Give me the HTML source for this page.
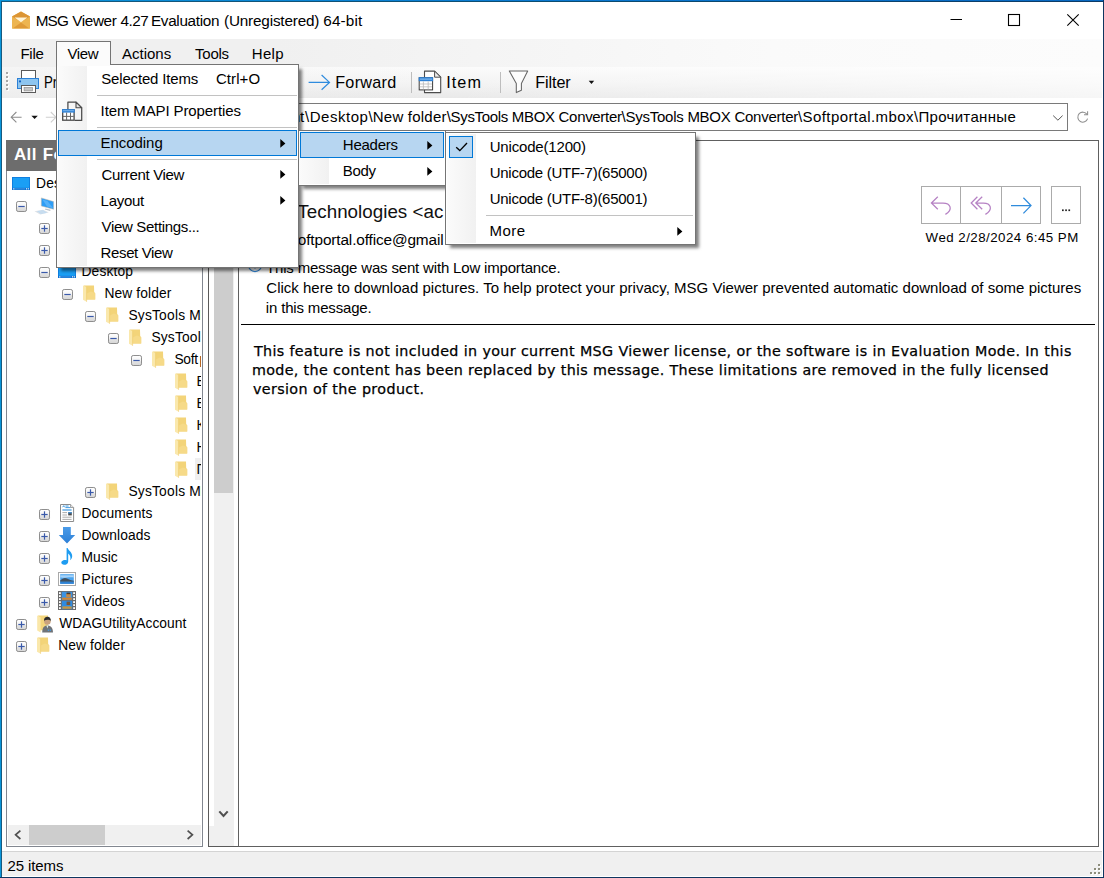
<!DOCTYPE html>
<html lang="en"><head><meta charset="utf-8"><title>MSG Viewer 4.27 Evaluation (Unregistered) 64-bit</title>
<style>
html,body{margin:0;padding:0;}
body{width:1104px;height:878px;position:relative;overflow:hidden;background:#fff;font-family:"Liberation Sans",sans-serif;}
.L{position:absolute;left:0;top:0;width:1104px;height:878px;overflow:hidden;}
svg{overflow:visible;display:block;}
</style></head><body>
<div class="L" style=""><!-- win -->
<div style="position:absolute;left:0px;top:0px;width:1104px;height:878px;background:#fff;"></div>
<div style="position:absolute;left:6px;top:140px;width:197px;height:707px;border:1px solid #828790;box-sizing:border-box;background:#fff;"></div>
<div style="position:absolute;left:6px;top:140px;width:197px;height:31px;background:#6d6d6d;"></div>
<svg width="0" height="0" style="position:absolute"><defs><linearGradient id="eg" x1="0" y1="0" x2="0" y2="1"><stop offset="0" stop-color="#fff"/><stop offset=".5" stop-color="#f3f3f3"/><stop offset=".62" stop-color="#e2e2e2"/><stop offset="1" stop-color="#d6d6d6"/></linearGradient><linearGradient id="dg" x1="0" y1="0" x2="0" y2="1"><stop offset="0" stop-color="#4a9be8"/><stop offset="1" stop-color="#2c7fd6"/></linearGradient></defs></svg>
</div>
<div class="L" style=""><!-- title -->
<svg style="position:absolute;left:11px;top:10px;" width="20" height="20" viewBox="0 0 20 20"><polygon points="1,6.5 10,1.5 19,6.5 19,18.7 1,18.7" fill="#edb551"/><polygon points="1,6.5 10,1.5 19,6.5 10,12" fill="#dc9534"/><polygon points="3.6,7.4 16.4,7.4 10,12.3" fill="#fff6da"/><polygon points="2,18.2 10,12.4 18,18.2" fill="#df9a38"/></svg>
<span style="position:absolute;left:35.8px;top:12.65px;font:400 15.3px/15.3px 'Liberation Sans', sans-serif;color:#000;white-space:pre;letter-spacing:-0.923px;">MSG </span>
<span style="position:absolute;left:72.2px;top:12.65px;font:400 15.3px/15.3px 'Liberation Sans', sans-serif;color:#000;white-space:pre;letter-spacing:-0.362px;">Viewer </span>
<span style="position:absolute;left:120.4px;top:12.65px;font:400 15.3px/15.3px 'Liberation Sans', sans-serif;color:#000;white-space:pre;letter-spacing:-0.484px;">4.27 </span>
<span style="position:absolute;left:151px;top:12.65px;font:400 15.3px/15.3px 'Liberation Sans', sans-serif;color:#000;white-space:pre;letter-spacing:-0.335px;">Evaluation </span>
<span style="position:absolute;left:224px;top:12.65px;font:400 15.3px/15.3px 'Liberation Sans', sans-serif;color:#000;white-space:pre;letter-spacing:-0.181px;">(Unregistered) </span>
<span style="position:absolute;left:323.3px;top:12.65px;font:400 15.3px/15.3px 'Liberation Sans', sans-serif;color:#000;white-space:pre;letter-spacing:0.137px;">64-bit</span>
<svg style="position:absolute;left:940px;top:2px;" width="160" height="37" viewBox="0 0 160 37"><path d="M10.5 17.5H22" stroke="#000" stroke-width="1" fill="none"/><rect x="68.5" y="12.5" width="11" height="11" stroke="#000" stroke-width="1.1" fill="none"/><path d="M127.3 12.3L138.7 23.7M138.7 12.3L127.3 23.7" stroke="#000" stroke-width="1.1" fill="none"/></svg>
</div>
<div class="L" style=""><!-- menubar -->
<div style="position:absolute;left:2px;top:39px;width:1100px;height:28px;background:linear-gradient(to right,#f0f0f0 0%,#f0f0f0 25%,#fafafa 70%,#fcfcfc 100%);"></div>
<span style="position:absolute;left:20.4px;top:46.00px;font:400 15px/15px 'Liberation Sans', sans-serif;color:#000;white-space:pre;letter-spacing:-0.243px;">File</span>
<span style="position:absolute;left:122.1px;top:46.00px;font:400 15px/15px 'Liberation Sans', sans-serif;color:#000;white-space:pre;letter-spacing:-0.015px;">Actions</span>
<span style="position:absolute;left:195.1px;top:46.00px;font:400 15px/15px 'Liberation Sans', sans-serif;color:#000;white-space:pre;letter-spacing:-0.254px;">Tools</span>
<span style="position:absolute;left:251.7px;top:46.00px;font:400 15px/15px 'Liberation Sans', sans-serif;color:#000;white-space:pre;letter-spacing:0.364px;">Help</span>
</div>
<div class="L" style=""><!-- toolbar -->
<div style="position:absolute;left:2px;top:67px;width:1100px;height:31px;background:linear-gradient(to bottom,#fbfbfb 0%,#f4f4f4 50%,#e9e9e9 100%);"></div>
<div style="position:absolute;left:2px;top:67px;width:1100px;height:31px;background:linear-gradient(to right,rgba(240,240,240,.6) 0%,rgba(255,255,255,0) 40%,rgba(255,255,255,.6) 100%);"></div>
<svg style="position:absolute;left:5px;top:70px;" width="5" height="24" viewBox="0 0 5 24"><rect x="2" y="3" width="2" height="2" fill="#fff"/><rect x="1" y="2" width="2" height="2" fill="#a6a6a6"/><rect x="2" y="7" width="2" height="2" fill="#fff"/><rect x="1" y="6" width="2" height="2" fill="#a6a6a6"/><rect x="2" y="11" width="2" height="2" fill="#fff"/><rect x="1" y="10" width="2" height="2" fill="#a6a6a6"/><rect x="2" y="15" width="2" height="2" fill="#fff"/><rect x="1" y="14" width="2" height="2" fill="#a6a6a6"/><rect x="2" y="19" width="2" height="2" fill="#fff"/><rect x="1" y="18" width="2" height="2" fill="#a6a6a6"/></svg>
<svg style="position:absolute;left:16px;top:69px;" width="25" height="25" viewBox="0 0 25 25"><rect x="5.5" y="1.5" width="14" height="8" fill="#fff" stroke="#5a5a5a" stroke-width="1"/><rect x="1.5" y="9.5" width="21" height="10" fill="#8ec5ef" stroke="#2b80d6" stroke-width="1"/><circle cx="4" cy="12.4" r="1.1" fill="#1566c8"/><rect x="5.5" y="16.5" width="14" height="7" fill="#fff" stroke="#5a5a5a" stroke-width="1"/><rect x="8.1" y="18.6" width="8.4" height="3.3" fill="#c6c6c6" stroke="#8f8f8f" stroke-width=".7"/></svg>
<span style="position:absolute;left:43.8px;top:73.89px;font:400 16.2px/16.2px 'Liberation Sans', sans-serif;color:#000;white-space:pre;transform:scaleX(.82);transform-origin:0 0;">Print</span>
<svg style="position:absolute;left:306px;top:72px;" width="26" height="20" viewBox="0 0 26 20"><path d="M2.6 10.4H23.2M15.6 3L23.5 10.4L15.6 17.8" stroke="#2e8bde" stroke-width="1.2" fill="none"/></svg>
<span style="position:absolute;left:335.2px;top:73.89px;font:400 16.2px/16.2px 'Liberation Sans', sans-serif;color:#000;white-space:pre;letter-spacing:0.289px;">Forward</span>
<div style="position:absolute;left:411px;top:72px;width:1px;height:21px;background:#bdbdbd;"></div>
<svg style="position:absolute;left:418px;top:69px;" width="24" height="24" viewBox="0 0 24 24"><path d="M6.5 2.1H16.6L22.7 8.2V23.6H6.5Z" fill="#fff" stroke="#4d4d4d" stroke-width="1.1" stroke-linejoin="round"/><path d="M16.6 2.1V8.2H22.7Z" fill="#ececec" stroke="#4d4d4d" stroke-width="1" stroke-linejoin="round"/><rect x="1.2" y="8.7" width="13.4" height="12.2" fill="#fff" stroke="#3a3a3a" stroke-width="1"/><rect x=".7" y="8.2" width="14.4" height="4" fill="#2f82d6"/><path d="M2 10.1H14" stroke="#9ccaf3" stroke-width=".9"/><path d="M5.4 12.4V20.4M10.2 12.4V20.4M1.8 15H14M1.8 17.8H14" stroke="#b9b9b9" stroke-width=".8" fill="none"/></svg>
<span style="position:absolute;left:446.3px;top:73.89px;font:400 16.2px/16.2px 'Liberation Sans', sans-serif;color:#000;white-space:pre;letter-spacing:1.034px;">Item</span>
<div style="position:absolute;left:500px;top:72px;width:1px;height:21px;background:#bdbdbd;"></div>
<svg style="position:absolute;left:508px;top:70px;" width="22" height="24" viewBox="0 0 22 24"><path d="M1.3 1H19.7L13.4 13.6V20.2L8.3 22.6V13.6Z" fill="#fdfdfd" stroke="#666" stroke-width="1.05" stroke-linejoin="round"/></svg>
<span style="position:absolute;left:535.2px;top:73.79px;font:400 16.2px/16.2px 'Liberation Sans', sans-serif;color:#000;white-space:pre;letter-spacing:-0.096px;">Filter</span>
<svg style="position:absolute;left:588px;top:79px;" width="8" height="6" viewBox="0 0 8 6"><path d="M.7 1.8H6.2L3.45 5.1Z" fill="#111"/></svg>
</div>
<div class="L" style=""><!-- addr -->
<svg style="position:absolute;left:8px;top:108px;" width="52" height="18" viewBox="0 0 52 18"><path d="M3.2 9.2H13.6M8.4 4L3.2 9.2L8.4 14.4" stroke="#8c8c8c" stroke-width="1.1" fill="none"/><path d="M23.4 7.8H29.8L26.6 11Z" fill="#111"/><path d="M37.8 9.2H48M42.8 4L48 9.2L42.8 14.4" stroke="#cfcfcf" stroke-width="1.1" fill="none"/></svg>
<div style="position:absolute;left:70px;top:103px;width:998px;height:28px;border:1px solid #7a7a7a;box-sizing:border-box;background:#fff;"></div>
<span style="position:absolute;left:291.9px;top:108.90px;font:400 15px/15px 'Liberation Sans', sans-serif;color:#000;white-space:pre;letter-spacing:-0.155px;">nt</span>
<span style="position:absolute;left:305.1px;top:108.90px;font:400 15px/15px 'Liberation Sans', sans-serif;color:#000;white-space:pre;letter-spacing:0.513px;">\Desktop</span>
<span style="position:absolute;left:368.4px;top:108.90px;font:400 15px/15px 'Liberation Sans', sans-serif;color:#000;white-space:pre;letter-spacing:0.221px;">\New folder</span>
<span style="position:absolute;left:446.7px;top:108.90px;font:400 15px/15px 'Liberation Sans', sans-serif;color:#000;white-space:pre;letter-spacing:-0.319px;">\SysTools MBOX Converter</span>
<span style="position:absolute;left:621.6px;top:108.90px;font:400 15px/15px 'Liberation Sans', sans-serif;color:#000;white-space:pre;letter-spacing:-0.257px;">\SysTools MBOX Converter</span>
<span style="position:absolute;left:798px;top:108.90px;font:400 15px/15px 'Liberation Sans', sans-serif;color:#000;white-space:pre;letter-spacing:0.418px;">\Softportal.mbox</span>
<span style="position:absolute;left:913.9px;top:108.90px;font:400 15px/15px 'Liberation Sans', sans-serif;color:#000;white-space:pre;letter-spacing:0.328px;">\Прочитанные</span>
<svg style="position:absolute;left:1050px;top:110px;" width="16" height="14" viewBox="0 0 16 14"><path d="M3.2 5.6L7.9 10.2L12.6 5.6" stroke="#555" stroke-width="1" fill="none"/></svg>
<svg style="position:absolute;left:1075px;top:108px;" width="18" height="18" viewBox="0 0 18 18"><path d="M12 6.4A5 5 0 1 0 12.6 10.6" stroke="#8e8e8e" stroke-width="1.05" fill="none"/><path d="M12.6 3.2V6.8H9" stroke="#8e8e8e" stroke-width="1.05" fill="none"/></svg>
</div>
<div class="L" style="left:7px;top:141px;width:194px;height:705px;"><!-- tree -->
<span style="position:absolute;left:6.9px;top:4.61px;font:700 17px/17px 'Liberation Sans', sans-serif;color:#fff;white-space:pre;letter-spacing:.45px;word-spacing:.6px;">All Folders</span>
<svg style="position:absolute;left:5px;top:36px;" width="18" height="13" viewBox="0 0 18 13"><rect x=".5" y=".5" width="17" height="12" fill="#1a9ff5" stroke="#0f7fe0" stroke-width="1"/><rect x="0" y="10.8" width="18" height="2.2" fill="#0a6fd2"/><rect x="1.2" y="11.3" width="1.2" height="1.2" fill="#fff"/><rect x="2.6" y="11.6" width="10.6" height=".7" fill="#5fa9ea"/><rect x="14" y="11.3" width="1.1" height="1.1" fill="#fff"/><rect x="15.8" y="11.3" width="1.1" height="1.1" fill="#fff"/></svg>
<span style="position:absolute;left:29.1px;top:36.22px;font:400 13.8px/13.8px 'Liberation Sans', sans-serif;color:#000;white-space:pre;letter-spacing:0.143px;">Desktop</span>
<svg style="position:absolute;left:9px;top:60px;" width="11" height="11" viewBox="0 0 11 11"><rect x=".5" y=".5" width="10" height="10" rx="1.7" fill="url(#eg)" stroke="#8e8e8e"/><path d="M2.3 5.5H8.7" stroke="#3a59aa" stroke-width="1.2"/></svg>
<svg style="position:absolute;left:27px;top:55px;" width="22" height="20" viewBox="0 0 22 20"><path d="M7.3 1.9L19.6 5.6V13.3L7.3 10Z" fill="#2e9df5" stroke="#c9b9a6" stroke-width=".5"/><path d="M8.4 3.4L13.4 4.9L18.6 11.6V12L13 10.5Z" fill="#63b8f9" opacity=".75"/><path d="M11.4 12.4L16.6 13.8L16.2 14.9L10.8 13.6Z" fill="#b9bfc7"/><path d="M.5 15.3L9 13.8L14.8 16.5L6.2 18.6Z" fill="#dde1e6"/><path d="M3.4 15.6L9.6 14.6M4.8 16.6L11.2 15.4M6.4 17.5L12.6 16.4" stroke="#b7d9f5" stroke-width=".8"/></svg>
<span style="position:absolute;left:52px;top:58.22px;font:400 13.8px/13.8px 'Liberation Sans', sans-serif;color:#000;white-space:pre;">This PC</span>
<svg style="position:absolute;left:32px;top:82px;" width="11" height="11" viewBox="0 0 11 11"><rect x=".5" y=".5" width="10" height="10" rx="1.7" fill="url(#eg)" stroke="#8e8e8e"/><path d="M2.3 5.5H8.7" stroke="#3a59aa" stroke-width="1.2"/><path d="M5.5 2.3V8.7" stroke="#3a59aa" stroke-width="1.2"/></svg>
<span style="position:absolute;left:75.5px;top:80.22px;font:400 13.8px/13.8px 'Liberation Sans', sans-serif;color:#000;white-space:pre;">3D Objects</span>
<svg style="position:absolute;left:32px;top:104px;" width="11" height="11" viewBox="0 0 11 11"><rect x=".5" y=".5" width="10" height="10" rx="1.7" fill="url(#eg)" stroke="#8e8e8e"/><path d="M2.3 5.5H8.7" stroke="#3a59aa" stroke-width="1.2"/><path d="M5.5 2.3V8.7" stroke="#3a59aa" stroke-width="1.2"/></svg>
<span style="position:absolute;left:75.5px;top:102.22px;font:400 13.8px/13.8px 'Liberation Sans', sans-serif;color:#000;white-space:pre;">Contacts</span>
<svg style="position:absolute;left:32px;top:126px;" width="11" height="11" viewBox="0 0 11 11"><rect x=".5" y=".5" width="10" height="10" rx="1.7" fill="url(#eg)" stroke="#8e8e8e"/><path d="M2.3 5.5H8.7" stroke="#3a59aa" stroke-width="1.2"/></svg>
<svg style="position:absolute;left:51px;top:124px;" width="18" height="13" viewBox="0 0 18 13"><rect x=".5" y=".5" width="17" height="12" fill="#1a9ff5" stroke="#0f7fe0" stroke-width="1"/><rect x="0" y="10.8" width="18" height="2.2" fill="#0a6fd2"/><rect x="1.2" y="11.3" width="1.2" height="1.2" fill="#fff"/><rect x="2.6" y="11.6" width="10.6" height=".7" fill="#5fa9ea"/><rect x="14" y="11.3" width="1.1" height="1.1" fill="#fff"/><rect x="15.8" y="11.3" width="1.1" height="1.1" fill="#fff"/></svg>
<span style="position:absolute;left:74.5px;top:124.22px;font:400 13.8px/13.8px 'Liberation Sans', sans-serif;color:#000;white-space:pre;letter-spacing:0.143px;">Desktop</span>
<svg style="position:absolute;left:55px;top:148px;" width="11" height="11" viewBox="0 0 11 11"><rect x=".5" y=".5" width="10" height="10" rx="1.7" fill="url(#eg)" stroke="#8e8e8e"/><path d="M2.3 5.5H8.7" stroke="#3a59aa" stroke-width="1.2"/></svg>
<svg style="position:absolute;left:76px;top:144px;" width="13" height="18" viewBox="0 0 13 18"><path d="M.8 .4H11L11.2 7L12.2 8.2V14.6H2.6Z" fill="#f3d479"/><path d="M3.6 8.4L8 6.4L12.2 8.2V14.6H3.4Z" fill="#f6da88"/><path d="M0 .6L3.6 2V16.8L0 14.8Z" fill="#fae8ac"/><path d="M3.6 2V16.8" stroke="#eecb6c" stroke-width=".6"/></svg>
<span style="position:absolute;left:97.4px;top:146.22px;font:400 13.8px/13.8px 'Liberation Sans', sans-serif;color:#000;white-space:pre;letter-spacing:0.105px;">New folder</span>
<svg style="position:absolute;left:78px;top:170px;" width="11" height="11" viewBox="0 0 11 11"><rect x=".5" y=".5" width="10" height="10" rx="1.7" fill="url(#eg)" stroke="#8e8e8e"/><path d="M2.3 5.5H8.7" stroke="#3a59aa" stroke-width="1.2"/></svg>
<svg style="position:absolute;left:99px;top:166px;" width="13" height="18" viewBox="0 0 13 18"><path d="M.8 .4H11L11.2 7L12.2 8.2V14.6H2.6Z" fill="#f3d479"/><path d="M3.6 8.4L8 6.4L12.2 8.2V14.6H3.4Z" fill="#f6da88"/><path d="M0 .6L3.6 2V16.8L0 14.8Z" fill="#fae8ac"/><path d="M3.6 2V16.8" stroke="#eecb6c" stroke-width=".6"/></svg>
<span style="position:absolute;left:121.4px;top:168.22px;font:400 13.8px/13.8px 'Liberation Sans', sans-serif;color:#000;white-space:pre;letter-spacing:0.207px;">SysTools M</span>
<span style="position:absolute;left:193.3px;top:168.22px;font:400 13.8px/13.8px 'Liberation Sans', sans-serif;color:#000;white-space:pre;">BOX Converter</span>
<svg style="position:absolute;left:101px;top:192px;" width="11" height="11" viewBox="0 0 11 11"><rect x=".5" y=".5" width="10" height="10" rx="1.7" fill="url(#eg)" stroke="#8e8e8e"/><path d="M2.3 5.5H8.7" stroke="#3a59aa" stroke-width="1.2"/></svg>
<svg style="position:absolute;left:122px;top:188px;" width="13" height="18" viewBox="0 0 13 18"><path d="M.8 .4H11L11.2 7L12.2 8.2V14.6H2.6Z" fill="#f3d479"/><path d="M3.6 8.4L8 6.4L12.2 8.2V14.6H3.4Z" fill="#f6da88"/><path d="M0 .6L3.6 2V16.8L0 14.8Z" fill="#fae8ac"/><path d="M3.6 2V16.8" stroke="#eecb6c" stroke-width=".6"/></svg>
<span style="position:absolute;left:144.4px;top:190.22px;font:400 13.8px/13.8px 'Liberation Sans', sans-serif;color:#000;white-space:pre;letter-spacing:0.176px;">SysTool</span>
<span style="position:absolute;left:194.6px;top:190.22px;font:400 13.8px/13.8px 'Liberation Sans', sans-serif;color:#000;white-space:pre;">s MBOX Converter</span>
<svg style="position:absolute;left:124px;top:214px;" width="11" height="11" viewBox="0 0 11 11"><rect x=".5" y=".5" width="10" height="10" rx="1.7" fill="url(#eg)" stroke="#8e8e8e"/><path d="M2.3 5.5H8.7" stroke="#3a59aa" stroke-width="1.2"/></svg>
<svg style="position:absolute;left:145px;top:210px;" width="13" height="18" viewBox="0 0 13 18"><path d="M.8 .4H11L11.2 7L12.2 8.2V14.6H2.6Z" fill="#f3d479"/><path d="M3.6 8.4L8 6.4L12.2 8.2V14.6H3.4Z" fill="#f6da88"/><path d="M0 .6L3.6 2V16.8L0 14.8Z" fill="#fae8ac"/><path d="M3.6 2V16.8" stroke="#eecb6c" stroke-width=".6"/></svg>
<span style="position:absolute;left:167.4px;top:212.22px;font:400 13.8px/13.8px 'Liberation Sans', sans-serif;color:#000;white-space:pre;letter-spacing:-0.303px;">Soft</span>
<span style="position:absolute;left:192.4px;top:212.22px;font:400 13.8px/13.8px 'Liberation Sans', sans-serif;color:#000;white-space:pre;">portal.mbox</span>
<svg style="position:absolute;left:168px;top:232px;" width="13" height="18" viewBox="0 0 13 18"><path d="M.8 .4H11L11.2 7L12.2 8.2V14.6H2.6Z" fill="#f3d479"/><path d="M3.6 8.4L8 6.4L12.2 8.2V14.6H3.4Z" fill="#f6da88"/><path d="M0 .6L3.6 2V16.8L0 14.8Z" fill="#fae8ac"/><path d="M3.6 2V16.8" stroke="#eecb6c" stroke-width=".6"/></svg>
<span style="position:absolute;left:189.4px;top:234.22px;font:400 13.8px/13.8px 'Liberation Sans', sans-serif;color:#000;white-space:pre;">Входящие</span>
<svg style="position:absolute;left:168px;top:254px;" width="13" height="18" viewBox="0 0 13 18"><path d="M.8 .4H11L11.2 7L12.2 8.2V14.6H2.6Z" fill="#f3d479"/><path d="M3.6 8.4L8 6.4L12.2 8.2V14.6H3.4Z" fill="#f6da88"/><path d="M0 .6L3.6 2V16.8L0 14.8Z" fill="#fae8ac"/><path d="M3.6 2V16.8" stroke="#eecb6c" stroke-width=".6"/></svg>
<span style="position:absolute;left:189.4px;top:256.22px;font:400 13.8px/13.8px 'Liberation Sans', sans-serif;color:#000;white-space:pre;">Важные</span>
<svg style="position:absolute;left:168px;top:276px;" width="13" height="18" viewBox="0 0 13 18"><path d="M.8 .4H11L11.2 7L12.2 8.2V14.6H2.6Z" fill="#f3d479"/><path d="M3.6 8.4L8 6.4L12.2 8.2V14.6H3.4Z" fill="#f6da88"/><path d="M0 .6L3.6 2V16.8L0 14.8Z" fill="#fae8ac"/><path d="M3.6 2V16.8" stroke="#eecb6c" stroke-width=".6"/></svg>
<span style="position:absolute;left:189.4px;top:278.22px;font:400 13.8px/13.8px 'Liberation Sans', sans-serif;color:#000;white-space:pre;">Корзина</span>
<svg style="position:absolute;left:168px;top:298px;" width="13" height="18" viewBox="0 0 13 18"><path d="M.8 .4H11L11.2 7L12.2 8.2V14.6H2.6Z" fill="#f3d479"/><path d="M3.6 8.4L8 6.4L12.2 8.2V14.6H3.4Z" fill="#f6da88"/><path d="M0 .6L3.6 2V16.8L0 14.8Z" fill="#fae8ac"/><path d="M3.6 2V16.8" stroke="#eecb6c" stroke-width=".6"/></svg>
<span style="position:absolute;left:189.4px;top:300.22px;font:400 13.8px/13.8px 'Liberation Sans', sans-serif;color:#000;white-space:pre;">Непрочитанные</span>
<svg style="position:absolute;left:168px;top:320px;" width="13" height="18" viewBox="0 0 13 18"><path d="M.8 .4H11L11.2 7L12.2 8.2V14.6H2.6Z" fill="#f3d479"/><path d="M3.6 8.4L8 6.4L12.2 8.2V14.6H3.4Z" fill="#f6da88"/><path d="M0 .6L3.6 2V16.8L0 14.8Z" fill="#fae8ac"/><path d="M3.6 2V16.8" stroke="#eecb6c" stroke-width=".6"/></svg>
<div style="position:absolute;left:188px;top:317px;width:8px;height:22px;background:#efefef;"></div>
<span style="position:absolute;left:189.4px;top:322.22px;font:400 13.8px/13.8px 'Liberation Sans', sans-serif;color:#000;white-space:pre;">Прочитанные</span>
<svg style="position:absolute;left:78px;top:346px;" width="11" height="11" viewBox="0 0 11 11"><rect x=".5" y=".5" width="10" height="10" rx="1.7" fill="url(#eg)" stroke="#8e8e8e"/><path d="M2.3 5.5H8.7" stroke="#3a59aa" stroke-width="1.2"/><path d="M5.5 2.3V8.7" stroke="#3a59aa" stroke-width="1.2"/></svg>
<svg style="position:absolute;left:99px;top:342px;" width="13" height="18" viewBox="0 0 13 18"><path d="M.8 .4H11L11.2 7L12.2 8.2V14.6H2.6Z" fill="#f3d479"/><path d="M3.6 8.4L8 6.4L12.2 8.2V14.6H3.4Z" fill="#f6da88"/><path d="M0 .6L3.6 2V16.8L0 14.8Z" fill="#fae8ac"/><path d="M3.6 2V16.8" stroke="#eecb6c" stroke-width=".6"/></svg>
<span style="position:absolute;left:121.4px;top:344.22px;font:400 13.8px/13.8px 'Liberation Sans', sans-serif;color:#000;white-space:pre;letter-spacing:0.207px;">SysTools M</span>
<span style="position:absolute;left:193.3px;top:344.22px;font:400 13.8px/13.8px 'Liberation Sans', sans-serif;color:#000;white-space:pre;">BOX Converter</span>
<svg style="position:absolute;left:32px;top:368px;" width="11" height="11" viewBox="0 0 11 11"><rect x=".5" y=".5" width="10" height="10" rx="1.7" fill="url(#eg)" stroke="#8e8e8e"/><path d="M2.3 5.5H8.7" stroke="#3a59aa" stroke-width="1.2"/><path d="M5.5 2.3V8.7" stroke="#3a59aa" stroke-width="1.2"/></svg>
<svg style="position:absolute;left:52px;top:362px;" width="16" height="20" viewBox="0 0 16 20"><path d="M1.5 1.5H11.6L14.6 4.5V18.5H1.5Z" fill="#fff" stroke="#8c8c8c" stroke-width="1"/><path d="M11.6 1.5V4.5H14.6" fill="#e8e8e8" stroke="#8c8c8c" stroke-width=".8"/><path d="M3.6 4.2L4.8 2.6L5.4 4.2M6.4 3H9.6M6.4 4.6H11.4" stroke="#2c8fdc" stroke-width=".9" fill="none"/><path d="M3.4 7H12.6" stroke="#2c8fdc" stroke-width="1.1"/><path d="M3.4 9.6H8M3.4 12H8M3.4 14.2H12.6M3.4 16.4H12.6" stroke="#a4a4a4" stroke-width=".9"/><rect x="9.2" y="9.2" width="3.6" height="3.2" fill="#4a4a4a"/><rect x="9.2" y="9.2" width="3.6" height="1.2" fill="#3c93de"/></svg>
<span style="position:absolute;left:74.5px;top:366.22px;font:400 13.8px/13.8px 'Liberation Sans', sans-serif;color:#000;white-space:pre;letter-spacing:0.127px;">Documents</span>
<svg style="position:absolute;left:32px;top:390px;" width="11" height="11" viewBox="0 0 11 11"><rect x=".5" y=".5" width="10" height="10" rx="1.7" fill="url(#eg)" stroke="#8e8e8e"/><path d="M2.3 5.5H8.7" stroke="#3a59aa" stroke-width="1.2"/><path d="M5.5 2.3V8.7" stroke="#3a59aa" stroke-width="1.2"/></svg>
<svg style="position:absolute;left:51px;top:385px;" width="18" height="18" viewBox="0 0 18 18"><path d="M5 1H12.8V9H17.2L9 17.4L.8 9H5Z" fill="url(#dg)"/></svg>
<span style="position:absolute;left:74.5px;top:388.22px;font:400 13.8px/13.8px 'Liberation Sans', sans-serif;color:#000;white-space:pre;letter-spacing:0.068px;">Downloads</span>
<svg style="position:absolute;left:32px;top:412px;" width="11" height="11" viewBox="0 0 11 11"><rect x=".5" y=".5" width="10" height="10" rx="1.7" fill="url(#eg)" stroke="#8e8e8e"/><path d="M2.3 5.5H8.7" stroke="#3a59aa" stroke-width="1.2"/><path d="M5.5 2.3V8.7" stroke="#3a59aa" stroke-width="1.2"/></svg>
<svg style="position:absolute;left:53px;top:406px;" width="14" height="19" viewBox="0 0 14 19"><path d="M6.6 1L7.6 1C8.4 3.4 12.4 5.4 12.2 9.2C12.1 10.8 11.3 12.2 10.2 13.2C11 10.4 10 8 8.2 6.6V14.4C8.2 16.6 6 18 3.8 17.8C1.6 17.6.8 16 1.6 14.6C2.4 13.2 4.6 12.6 6.6 13.2Z" fill="#1e9cf1"/></svg>
<span style="position:absolute;left:74.5px;top:410.22px;font:400 13.8px/13.8px 'Liberation Sans', sans-serif;color:#000;white-space:pre;letter-spacing:0.043px;">Music</span>
<svg style="position:absolute;left:32px;top:434px;" width="11" height="11" viewBox="0 0 11 11"><rect x=".5" y=".5" width="10" height="10" rx="1.7" fill="url(#eg)" stroke="#8e8e8e"/><path d="M2.3 5.5H8.7" stroke="#3a59aa" stroke-width="1.2"/><path d="M5.5 2.3V8.7" stroke="#3a59aa" stroke-width="1.2"/></svg>
<svg style="position:absolute;left:51px;top:431px;" width="18" height="14" viewBox="0 0 18 14"><rect x=".5" y=".5" width="17" height="13" fill="#fff" stroke="#a9a9a9"/><rect x="2.2" y="2.2" width="13.6" height="9.6" fill="#4aa3ee"/><path d="M2.2 3.2H15.8V5.4C12 4.6 8 6 2.2 5.6Z" fill="#a8d4f8"/><path d="M2.2 8.6C4.6 6.2 7 5.4 9 6.6C11 7.8 13.6 8.6 15.8 8.8V9.8H2.2Z" fill="#41505e"/><path d="M2.2 9.8H15.8V11.8H2.2Z" fill="#2f82d4"/></svg>
<span style="position:absolute;left:74.5px;top:432.22px;font:400 13.8px/13.8px 'Liberation Sans', sans-serif;color:#000;white-space:pre;letter-spacing:0.194px;">Pictures</span>
<svg style="position:absolute;left:32px;top:456px;" width="11" height="11" viewBox="0 0 11 11"><rect x=".5" y=".5" width="10" height="10" rx="1.7" fill="url(#eg)" stroke="#8e8e8e"/><path d="M2.3 5.5H8.7" stroke="#3a59aa" stroke-width="1.2"/><path d="M5.5 2.3V8.7" stroke="#3a59aa" stroke-width="1.2"/></svg>
<svg style="position:absolute;left:51px;top:450px;" width="18" height="19" viewBox="0 0 18 19"><rect x="0" y="0" width="18" height="19" fill="#6b6b6b"/><rect x="3.8" y=".8" width="10.4" height="8.4" fill="#3d93e3"/><rect x="3.8" y="10" width="10.4" height="8.2" fill="#2f8be0"/><rect x="8.2" y="2.6" width="4.6" height="3.6" fill="#c58a4a"/><rect x="8.6" y="1.6" width="3.8" height="1.6" fill="#4b3a2a"/><rect x="4.2" y="6.6" width="9.6" height="2.2" fill="#d8862e"/><rect x="8.6" y="10.6" width="3.6" height="3.4" fill="#7a5636"/><rect x="4.4" y="15.4" width="9.2" height="2.4" fill="#c9953e"/><rect x="1" y="1.2" width="1.8" height="1.8" fill="#fff"/><rect x="15.2" y="1.2" width="1.8" height="1.8" fill="#fff"/><rect x="1" y="4.2" width="1.8" height="1.8" fill="#fff"/><rect x="15.2" y="4.2" width="1.8" height="1.8" fill="#fff"/><rect x="1" y="7.2" width="1.8" height="1.8" fill="#fff"/><rect x="15.2" y="7.2" width="1.8" height="1.8" fill="#fff"/><rect x="1" y="10.2" width="1.8" height="1.8" fill="#fff"/><rect x="15.2" y="10.2" width="1.8" height="1.8" fill="#fff"/><rect x="1" y="13.2" width="1.8" height="1.8" fill="#fff"/><rect x="15.2" y="13.2" width="1.8" height="1.8" fill="#fff"/><rect x="1" y="16.2" width="1.8" height="1.8" fill="#fff"/><rect x="15.2" y="16.2" width="1.8" height="1.8" fill="#fff"/></svg>
<span style="position:absolute;left:75.5px;top:454.22px;font:400 13.8px/13.8px 'Liberation Sans', sans-serif;color:#000;white-space:pre;letter-spacing:0.052px;">Videos</span>
<svg style="position:absolute;left:9px;top:478px;" width="11" height="11" viewBox="0 0 11 11"><rect x=".5" y=".5" width="10" height="10" rx="1.7" fill="url(#eg)" stroke="#8e8e8e"/><path d="M2.3 5.5H8.7" stroke="#3a59aa" stroke-width="1.2"/><path d="M5.5 2.3V8.7" stroke="#3a59aa" stroke-width="1.2"/></svg>
<svg style="position:absolute;left:30px;top:474px;" width="18" height="19" viewBox="0 0 18 19"><path d="M1 .4H11V15.2H2.6Z" fill="#f4d67d"/><path d="M.2 .6L3.6 2.2V17.6L.2 15.6Z" fill="#fae7a9"/><ellipse cx="10.4" cy="6.2" rx="3.3" ry="3.6" fill="#c9a27e"/><path d="M7 5.8C7 2.6 9 1.8 10.6 1.8C12.8 1.8 14 3.4 13.8 6C12.8 4.6 9.6 4.2 7 5.8Z" fill="#2b2b2b"/><path d="M5.2 17.6C5.2 13 7 10.6 10.4 10.6C13.8 10.6 16 13 16 17.6Z" fill="#6f7378"/><path d="M9.4 10.6L10.4 13.6L11.4 10.6Z" fill="#dff3f0"/><rect x="10.8" y="14.6" width="1.2" height="1.2" fill="#3fa0ea"/><rect x="12.8" y="14.6" width="1.2" height="1.2" fill="#3fa0ea"/></svg>
<span style="position:absolute;left:52.2px;top:476.22px;font:400 13.8px/13.8px 'Liberation Sans', sans-serif;color:#000;white-space:pre;letter-spacing:0.037px;">WDAGUtilityAccount</span>
<svg style="position:absolute;left:9px;top:500px;" width="11" height="11" viewBox="0 0 11 11"><rect x=".5" y=".5" width="10" height="10" rx="1.7" fill="url(#eg)" stroke="#8e8e8e"/><path d="M2.3 5.5H8.7" stroke="#3a59aa" stroke-width="1.2"/><path d="M5.5 2.3V8.7" stroke="#3a59aa" stroke-width="1.2"/></svg>
<svg style="position:absolute;left:30px;top:496px;" width="13" height="18" viewBox="0 0 13 18"><path d="M.8 .4H11L11.2 7L12.2 8.2V14.6H2.6Z" fill="#f3d479"/><path d="M3.6 8.4L8 6.4L12.2 8.2V14.6H3.4Z" fill="#f6da88"/><path d="M0 .6L3.6 2V16.8L0 14.8Z" fill="#fae8ac"/><path d="M3.6 2V16.8" stroke="#eecb6c" stroke-width=".6"/></svg>
<span style="position:absolute;left:51.2px;top:498.22px;font:400 13.8px/13.8px 'Liberation Sans', sans-serif;color:#000;white-space:pre;letter-spacing:0.094px;">New folder</span>
<div style="position:absolute;left:1px;top:684px;width:193px;height:20px;background:#f0f0f0;"></div>
<div style="position:absolute;left:22px;top:684px;width:76px;height:20px;background:#cdcdcd;"></div>
<svg style="position:absolute;left:5px;top:685px;" width="12" height="18" viewBox="0 0 12 18"><path d="M8.4 4.6L3.6 8.8L8.4 13" stroke="#505050" stroke-width="1.7" fill="none"/></svg>
<svg style="position:absolute;left:177px;top:685px;" width="12" height="18" viewBox="0 0 12 18"><path d="M3.6 4.6L8.4 8.8L3.6 13" stroke="#505050" stroke-width="1.7" fill="none"/></svg>
</div>
<div class="L" style=""><!-- pane2 -->
<div style="position:absolute;left:208px;top:140px;width:31px;height:707px;border:1px solid #5a5a5a;border-right:none;box-sizing:border-box;background:#fff;"></div>
<div style="position:absolute;left:214px;top:141px;width:20px;height:685px;background:#f0f0f0;"></div>
<div style="position:absolute;left:209px;top:826px;width:25px;height:20px;background:#f0f0f0;"></div>
<div style="position:absolute;left:214px;top:162px;width:19px;height:331px;background:#cdcdcd;"></div>
<svg style="position:absolute;left:217px;top:808px;" width="14" height="12" viewBox="0 0 14 12"><path d="M2.3 3.4L6.5 7.9L10.7 3.4" stroke="#505050" stroke-width="2.1" fill="none"/></svg>
</div>
<div class="L" style=""><!-- content -->
<div style="position:absolute;left:238px;top:140px;width:861px;height:707px;border:1px solid #606060;box-sizing:border-box;background:#fff;"></div>
<span style="position:absolute;left:297.4px;top:203.39px;font:400 18.8px/18.8px 'Liberation Sans', sans-serif;color:#111;white-space:pre;letter-spacing:0.022px;">Technologies &lt;ac</span>
<span style="position:absolute;left:297.8px;top:231.66px;font:400 15.4px/15.4px 'Liberation Sans', sans-serif;color:#000;white-space:pre;letter-spacing:-0.142px;">oftportal.office@gmail</span>
<span style="position:absolute;left:445px;top:231.66px;font:400 15.4px/15.4px 'Liberation Sans', sans-serif;color:#000;white-space:pre;">.com</span>
<svg style="position:absolute;left:246.5px;top:256.8px;" width="16" height="16" viewBox="0 0 16 16"><circle cx="8" cy="8" r="6.6" fill="#fff" stroke="#2f86d8" stroke-width="1.1"/><path d="M8 7V11.6" stroke="#2f86d8" stroke-width="1.3"/><circle cx="8" cy="4.8" r=".9" fill="#2f86d8"/></svg>
<span style="position:absolute;left:266px;top:259.50px;font:400 15px/15px 'Liberation Sans', sans-serif;color:#000;white-space:pre;letter-spacing:-0.174px;">This message was sent with Low importance.</span>
<span style="position:absolute;left:266.3px;top:279.70px;font:400 15px/15px 'Liberation Sans', sans-serif;color:#000;white-space:pre;letter-spacing:0.010px;">Click here to download pictures. To help protect your privacy, MSG Viewer prevented automatic download of some pictures</span>
<span style="position:absolute;left:265.8px;top:299.50px;font:400 15px/15px 'Liberation Sans', sans-serif;color:#000;white-space:pre;letter-spacing:-0.168px;">in this message.</span>
<div style="position:absolute;left:241px;top:324px;width:854px;height:1px;background:#000;"></div>
<span style="position:absolute;left:253.9px;top:343.90px;font:400 14.3px/14.3px 'DejaVu Sans', sans-serif;color:#000;white-space:pre;letter-spacing:0.364px;-webkit-text-stroke:.25px #000;">This feature is not included in your current MSG Viewer license, or the software is in Evaluation Mode. In this</span>
<span style="position:absolute;left:251.9px;top:363.00px;font:400 14.3px/14.3px 'DejaVu Sans', sans-serif;color:#000;white-space:pre;letter-spacing:0.340px;-webkit-text-stroke:.25px #000;">mode, the content has been replaced by this message. These limitations are removed in the fully licensed</span>
<span style="position:absolute;left:252.9px;top:382.20px;font:400 14.3px/14.3px 'DejaVu Sans', sans-serif;color:#000;white-space:pre;letter-spacing:0.385px;-webkit-text-stroke:.25px #000;">version of the product.</span>
<div style="position:absolute;left:921px;top:186px;width:120px;height:38px;border:1px solid #ababab;box-sizing:border-box;background:#fff;"></div>
<div style="position:absolute;left:960px;top:186px;width:1px;height:38px;background:#ababab;"></div>
<div style="position:absolute;left:1001px;top:186px;width:1px;height:38px;background:#ababab;"></div>
<div style="position:absolute;left:1051px;top:186px;width:30px;height:38px;border:1px solid #ababab;box-sizing:border-box;background:#fff;"></div>
<svg style="position:absolute;left:921px;top:186px;" width="160" height="38" viewBox="0 0 160 38"><path d="M10.4 17H22C29.6 17 32.4 23.4 24.4 28.4M16.8 10.8L10.4 17L16.8 23.2" stroke="#b682c4" stroke-width="1.25" fill="none"/><path d="M54.8 17H62.4C70 17 72.4 23.4 64.4 28.4M61.2 10.8L54.8 17L61.2 23.2M56.4 10.8L50.2 17L56.4 23.2" stroke="#b682c4" stroke-width="1.25" fill="none"/><path d="M90 19.6H109.6M102.4 11.8L110 19.6L102.4 27.4" stroke="#2f8bdc" stroke-width="1.25" fill="none"/><rect x="141" y="23.4" width="1.7" height="1.7" fill="#222"/><rect x="144.2" y="23.4" width="1.7" height="1.7" fill="#222"/><rect x="147.4" y="23.4" width="1.7" height="1.7" fill="#222"/></svg>
<span style="position:absolute;left:925.6px;top:231.14px;font:400 13.3px/13.3px 'Liberation Sans', sans-serif;color:#000;white-space:pre;letter-spacing:0.476px;">Wed 2/28/2024 6:45 PM</span>
</div>
<div class="L" style=""><!-- status -->
<div style="position:absolute;left:2px;top:851px;width:1100px;height:1px;background:#d4d4d4;"></div>
<div style="position:absolute;left:2px;top:852px;width:1100px;height:24px;background:#f0f0f0;"></div>
<span style="position:absolute;left:7.5px;top:857.90px;font:400 15px/15px 'Liberation Sans', sans-serif;color:#000;white-space:pre;letter-spacing:-0.098px;">25 items</span>
<svg style="position:absolute;left:1089px;top:863px;" width="13" height="13" viewBox="0 0 13 13"><rect x="10" y="2" width="2" height="2" fill="#fff"/><rect x="9" y="1" width="2" height="2" fill="#8d8d7c"/><rect x="6" y="6" width="2" height="2" fill="#fff"/><rect x="5" y="5" width="2" height="2" fill="#8d8d7c"/><rect x="10" y="6" width="2" height="2" fill="#fff"/><rect x="9" y="5" width="2" height="2" fill="#8d8d7c"/><rect x="2" y="10" width="2" height="2" fill="#fff"/><rect x="1" y="9" width="2" height="2" fill="#8d8d7c"/><rect x="6" y="10" width="2" height="2" fill="#fff"/><rect x="5" y="9" width="2" height="2" fill="#8d8d7c"/><rect x="10" y="10" width="2" height="2" fill="#fff"/><rect x="9" y="9" width="2" height="2" fill="#8d8d7c"/></svg>
</div>
<div class="L" style=""><!-- menu1 -->
<div style="position:absolute;left:56px;top:41px;width:55px;height:25px;border:1px solid #747474;border-bottom:none;box-sizing:border-box;background:#fbfbfb;"></div>
<div style="position:absolute;left:56px;top:64px;width:243px;height:204px;border:1px solid #747474;box-sizing:border-box;background:#fff;box-shadow:4px 4px 3px -1px rgba(0,0,0,.5);"></div>
<div style="position:absolute;left:57px;top:64px;width:53px;height:2px;background:#fbfbfb;"></div>
<div style="position:absolute;left:58px;top:66px;width:29px;height:200px;background:linear-gradient(to right,#fbfbfb,#f1f1f1);"></div>
<span style="position:absolute;left:67.4px;top:46.00px;font:400 15px/15px 'Liberation Sans', sans-serif;color:#000;white-space:pre;letter-spacing:-0.336px;">View</span>
<span style="position:absolute;left:101.2px;top:71.10px;font:400 15px/15px 'Liberation Sans', sans-serif;color:#000;white-space:pre;letter-spacing:-0.163px;">Selected Items</span>
<span style="position:absolute;left:215.9px;top:71.10px;font:400 15px/15px 'Liberation Sans', sans-serif;color:#000;white-space:pre;letter-spacing:0.083px;">Ctrl+O</span>
<div style="position:absolute;left:97px;top:95px;width:200px;height:1px;background:#c2c2c2;"></div>
<svg style="position:absolute;left:61px;top:100px;" width="22" height="22" viewBox="0 0 22 22"><path d="M6.9 9V2.1H15L20.7 7.8V20.4H13.6" fill="none" stroke="#4a4a4a" stroke-width="1.25" stroke-linejoin="round"/><path d="M15 2.1V7.8H20.7Z" fill="#e4e4e4" stroke="#4a4a4a" stroke-width="1.1" stroke-linejoin="round"/><rect x="1.7" y="9.8" width="11.4" height="10.4" fill="#fff" stroke="#4a4a4a" stroke-width="1.3"/><rect x="1" y="9.1" width="12.8" height="3.5" fill="#2f82d6"/><path d="M2 10.7H12.8" stroke="#8fc3f1" stroke-width=".8"/><path d="M5.6 12.6V20M9.5 12.6V20M2 16.4H12.8" stroke="#666" stroke-width="1" fill="none"/></svg>
<span style="position:absolute;left:100.6px;top:102.70px;font:400 15px/15px 'Liberation Sans', sans-serif;color:#000;white-space:pre;letter-spacing:-0.118px;">Item MAPI Properties</span>
<div style="position:absolute;left:97px;top:127px;width:200px;height:1px;background:#c2c2c2;"></div>
<div style="position:absolute;left:58px;top:130px;width:239px;height:26px;border:1px solid #0078d7;box-sizing:border-box;background:#b7d6f1;"></div>
<span style="position:absolute;left:100.6px;top:134.90px;font:400 15px/15px 'Liberation Sans', sans-serif;color:#000;white-space:pre;letter-spacing:-0.058px;">Encoding</span>
<div style="position:absolute;left:97px;top:159px;width:200px;height:1px;background:#c2c2c2;"></div>
<span style="position:absolute;left:101.6px;top:166.90px;font:400 15px/15px 'Liberation Sans', sans-serif;color:#000;white-space:pre;letter-spacing:-0.327px;">Current View</span>
<span style="position:absolute;left:100.6px;top:193.00px;font:400 15px/15px 'Liberation Sans', sans-serif;color:#000;white-space:pre;letter-spacing:-0.294px;">Layout</span>
<span style="position:absolute;left:101.6px;top:219.10px;font:400 15px/15px 'Liberation Sans', sans-serif;color:#000;white-space:pre;letter-spacing:-0.330px;">View Settings...</span>
<span style="position:absolute;left:100.6px;top:245.10px;font:400 15px/15px 'Liberation Sans', sans-serif;color:#000;white-space:pre;letter-spacing:-0.373px;">Reset View</span>
<svg style="position:absolute;left:279.6px;top:139.1px;" width="6" height="9" viewBox="0 0 6 9"><path d="M.3 0L5.4 4.4L.3 8.8Z" fill="#000"/></svg>
<svg style="position:absolute;left:279.6px;top:170.3px;" width="6" height="9" viewBox="0 0 6 9"><path d="M.3 0L5.4 4.4L.3 8.8Z" fill="#000"/></svg>
<svg style="position:absolute;left:279.6px;top:196.3px;" width="6" height="9" viewBox="0 0 6 9"><path d="M.3 0L5.4 4.4L.3 8.8Z" fill="#000"/></svg>
</div>
<div class="L" style=""><!-- menu2 -->
<div style="position:absolute;left:298px;top:130px;width:148px;height:56px;border:1px solid #747474;box-sizing:border-box;background:#fff;box-shadow:4px 4px 3px -1px rgba(0,0,0,.5);"></div>
<div style="position:absolute;left:299px;top:131px;width:30px;height:53px;background:linear-gradient(to right,#fbfbfb,#f1f1f1);"></div>
<div style="position:absolute;left:300px;top:132px;width:144px;height:26px;border:1px solid #0078d7;box-sizing:border-box;background:#b7d6f1;"></div>
<span style="position:absolute;left:342.8px;top:136.80px;font:400 15px/15px 'Liberation Sans', sans-serif;color:#000;white-space:pre;letter-spacing:-0.233px;">Headers</span>
<span style="position:absolute;left:342.8px;top:162.70px;font:400 15px/15px 'Liberation Sans', sans-serif;color:#000;white-space:pre;letter-spacing:-0.296px;">Body</span>
<svg style="position:absolute;left:426.7px;top:141.1px;" width="6" height="9" viewBox="0 0 6 9"><path d="M.3 0L5.4 4.4L.3 8.8Z" fill="#000"/></svg>
<svg style="position:absolute;left:426.7px;top:167.1px;" width="6" height="9" viewBox="0 0 6 9"><path d="M.3 0L5.4 4.4L.3 8.8Z" fill="#000"/></svg>
</div>
<div class="L" style=""><!-- menu3 -->
<div style="position:absolute;left:445px;top:132px;width:251px;height:113px;border:1px solid #747474;box-sizing:border-box;background:#fff;box-shadow:4px 4px 3px -1px rgba(0,0,0,.5);"></div>
<div style="position:absolute;left:447px;top:134px;width:29px;height:109px;background:linear-gradient(to right,#fbfbfb,#f1f1f1);"></div>
<div style="position:absolute;left:449px;top:136px;width:24px;height:22px;border:1px solid #0078d7;box-sizing:border-box;background:#b7d6f1;"></div>
<svg style="position:absolute;left:454px;top:141px;" width="14" height="12" viewBox="0 0 14 12"><path d="M2.2 6.3L5.8 9.6L13 2" stroke="#000" stroke-width="1.35" fill="none"/></svg>
<span style="position:absolute;left:489.7px;top:139.20px;font:400 15px/15px 'Liberation Sans', sans-serif;color:#000;white-space:pre;letter-spacing:-0.175px;">Unicode(1200)</span>
<span style="position:absolute;left:489.7px;top:165.10px;font:400 15px/15px 'Liberation Sans', sans-serif;color:#000;white-space:pre;letter-spacing:-0.266px;">Unicode (UTF-7)(65000)</span>
<span style="position:absolute;left:489.7px;top:190.90px;font:400 15px/15px 'Liberation Sans', sans-serif;color:#000;white-space:pre;letter-spacing:-0.266px;">Unicode (UTF-8)(65001)</span>
<div style="position:absolute;left:486px;top:215px;width:207px;height:1px;background:#c2c2c2;"></div>
<span style="position:absolute;left:489.6px;top:222.80px;font:400 15px/15px 'Liberation Sans', sans-serif;color:#000;white-space:pre;letter-spacing:0.456px;">More</span>
<svg style="position:absolute;left:676.8px;top:226.8px;" width="6" height="9" viewBox="0 0 6 9"><path d="M.3 0L5.4 4.4L.3 8.8Z" fill="#000"/></svg>
</div>
<div class="L" style=""><!-- frame -->
<div style="position:absolute;left:0px;top:0px;width:1104px;height:1px;background:linear-gradient(to right,#0a93d8,#0a78d0 50%,#0868c0);"></div>
<div style="position:absolute;left:0px;top:1px;width:1104px;height:1px;background:linear-gradient(to right,#175b80,#0b4c70 50%,#0c3a66);"></div>
<div style="position:absolute;left:0px;top:0px;width:1px;height:878px;background:#0a95da;"></div>
<div style="position:absolute;left:1px;top:1px;width:1px;height:877px;background:#185a7e;"></div>
<div style="position:absolute;left:1103px;top:0px;width:1px;height:878px;background:#0e365f;"></div>
<div style="position:absolute;left:0px;top:877px;width:1104px;height:1px;background:#0e365f;"></div>
</div>
</body></html>
